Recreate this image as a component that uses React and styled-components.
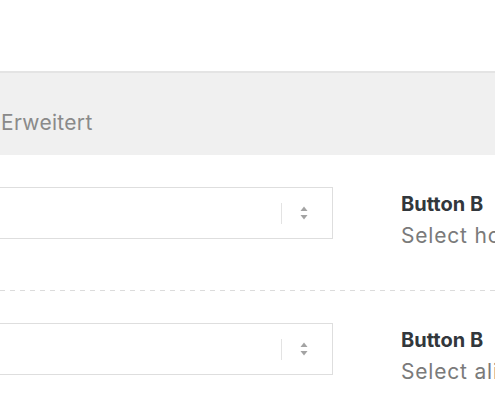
import React from "react";
import styled, { createGlobalStyle } from "styled-components";

const GlobalStyle = createGlobalStyle`
  html, body {
    margin: 0;
    padding: 0;
    background: #fff;
    overflow: hidden;
  }
  body {
    font-family: Inter, "Liberation Sans", Arial, sans-serif;
  }
`;

const rows = [
  { title: "Button B", desc: "Select hover style" },
  { title: "Button B", desc: "Select alignment" },
];

const App = () => {
  return (
    <Viewport>
      <GlobalStyle />
      <Panel>
        <SectionHeader>Erweitert</SectionHeader>
        {rows.map((row, i) => (
          <Row key={row.desc} $last={i === rows.length - 1}>
            <SelectBox>
              <Indicators>
                <Separator />
                <Chevrons>
                  <svg width="8" height="14" viewBox="0 0 8 14">
                    <path d="M4 0.5 L7.5 5 L0.5 5 Z" fill="#a3a3a3" />
                    <path d="M4 13.5 L7.5 9 L0.5 9 Z" fill="#a3a3a3" />
                  </svg>
                </Chevrons>
              </Indicators>
            </SelectBox>
            <Label>
              <h4>{row.title}</h4>
              <p>{row.desc}</p>
            </Label>
          </Row>
        ))}
      </Panel>
    </Viewport>
  );
};

const Viewport = styled.div`
  width: 495px;
  height: 400px;
  overflow: hidden;
  padding-top: 71px;
  box-sizing: border-box;
`;

const Panel = styled.div`
  margin-left: -150px;
  width: 900px;
`;

const SectionHeader = styled.div`
  height: 84px;
  border-top: 2px solid #e4e4e4;
  background: #f0f0f0;
  padding-left: 151px;
  padding-top: 16px;
  box-sizing: border-box;
  display: flex;
  align-items: center;
  font-size: 21px;
  letter-spacing: 0.3px;
  color: #8a8a8a;
`;

const Row = styled.div`
  display: flex;
  align-items: flex-start;
  gap: 68px;
  padding: 32px 0 42px;
  background-image: ${({ $last }) =>
    $last
      ? "none"
      : "repeating-linear-gradient(90deg, #dcdcdc 0 5px, transparent 5px 10px)"};
  background-size: 100% 1px;
  background-position: left bottom;
  background-repeat: no-repeat;
`;

const SelectBox = styled.div`
  width: 483px;
  height: 52px;
  box-sizing: border-box;
  border: 1px solid #dedede;
  background: #fff;
  display: flex;
  justify-content: flex-end;
  align-items: center;
`;

const Indicators = styled.div`
  display: flex;
  align-items: center;
  height: 100%;
`;

const Separator = styled.span`
  width: 1px;
  height: 21px;
  background: #e3e3e3;
`;

const Chevrons = styled.span`
  display: flex;
  align-items: center;
  padding: 0 24px 0 18px;
  svg {
    display: block;
  }
`;

const Label = styled.div`
  padding-top: 4px;
  white-space: nowrap;

  h4 {
    margin: 0;
    font-size: 20px;
    line-height: 26px;
    font-weight: 700;
    color: #32373c;
  }

  p {
    margin: 6px 0 0;
    font-size: 21px;
    line-height: 26px;
    letter-spacing: 0.8px;
    color: #7a7a7a;
  }
`;

export default App;
